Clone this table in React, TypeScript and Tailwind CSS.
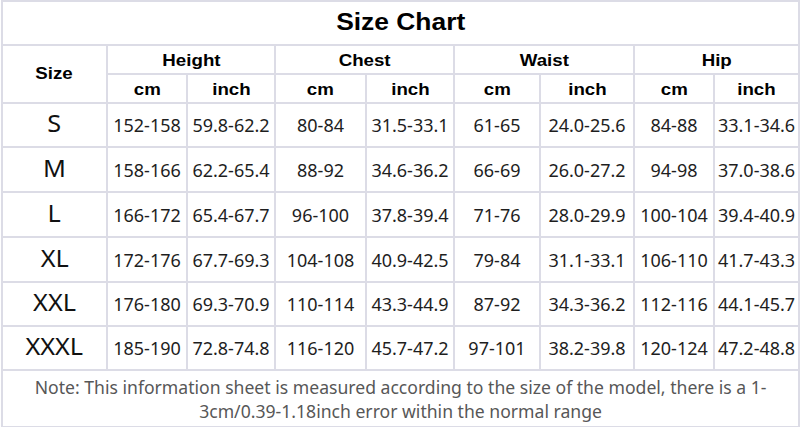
import React from 'react';

const rows = [
  { size: 'S', h: 'h-[44px]', v: ['152-158', '59.8-62.2', '80-84', '31.5-33.1', '61-65', '24.0-25.6', '84-88', '33.1-34.6'] },
  { size: 'M', h: 'h-[45px]', v: ['158-166', '62.2-65.4', '88-92', '34.6-36.2', '66-69', '26.0-27.2', '94-98', '37.0-38.6'] },
  { size: 'L', h: 'h-[45px]', v: ['166-172', '65.4-67.7', '96-100', '37.8-39.4', '71-76', '28.0-29.9', '100-104', '39.4-40.9'] },
  { size: 'XL', h: 'h-[45px]', v: ['172-176', '67.7-69.3', '104-108', '40.9-42.5', '79-84', '31.1-33.1', '106-110', '41.7-43.3'] },
  { size: 'XXL', h: 'h-[44px]', v: ['176-180', '69.3-70.9', '110-114', '43.3-44.9', '87-92', '34.3-36.2', '112-116', '44.1-45.7'] },
  { size: 'XXXL', h: 'h-[44px]', v: ['185-190', '72.8-74.8', '116-120', '45.7-47.2', '97-101', '38.2-39.8', '120-124', '47.2-48.8'] },
];

const groups = ['Height', 'Chest', 'Waist', 'Hip'];

const cell = 'border-2 border-[#dcdce6] text-center align-middle p-0';
const bold = "font-['Liberation_Sans',Arial,sans-serif] font-bold text-black";
const body = "font-['Noto_Sans','Open_Sans',sans-serif]";

export default function App() {
  return (
    <div className="w-[800px] h-[427px] bg-white overflow-hidden pl-[1px]">
      <table className="w-[797px] table-fixed border-collapse">
        <colgroup>
          <col className="w-[105px]" />
          <col className="w-[80px]" />
          <col className="w-[88px]" />
          <col className="w-[91px]" />
          <col className="w-[88px]" />
          <col className="w-[86px]" />
          <col className="w-[94px]" />
          <col className="w-[80px]" />
          <col className="w-[85px]" />
        </colgroup>
        <tbody>
          <tr className="h-[44px]">
            <td colSpan={9} className={cell}>
              <span className={`${bold} inline-block scale-x-110 text-[24px] leading-none`}>Size Chart</span>
            </td>
          </tr>
          <tr className="h-[29px]">
            <td rowSpan={2} className={cell}>
              <span className={`${bold} inline-block scale-x-110 text-[17px]`}>Size</span>
            </td>
            {groups.map((g) => (
              <td key={g} colSpan={2} className={cell}>
                <span className={`${bold} inline-block scale-x-110 text-[17px] leading-none`}>{g}</span>
              </td>
            ))}
          </tr>
          <tr className="h-[29px]">
            {groups.map((g) => (
              <React.Fragment key={g}>
                <td className={cell}>
                  <span className={`${bold} inline-block scale-x-110 text-[17px] leading-none`}>cm</span>
                </td>
                <td className={cell}>
                  <span className={`${bold} inline-block scale-x-110 text-[17px] leading-none`}>inch</span>
                </td>
              </React.Fragment>
            ))}
          </tr>
          {rows.map((r) => (
            <tr key={r.size} className={r.h}>
              <td className={cell}>
                <span className={`${body} inline-block scale-x-110 text-[23px] leading-none text-[#111]`}>{r.size}</span>
              </td>
              {r.v.map((x, i) => (
                <td key={i} className={`${cell} ${body} text-[18px] leading-none text-[#1e1e1e] whitespace-nowrap`}>
                  {x}
                </td>
              ))}
            </tr>
          ))}
          <tr className="h-[57px]">
            <td colSpan={9} className={`${cell} ${body} px-6 text-[17.6px] leading-[24px] text-[#575757]`}>
              Note: This information sheet is measured according to the size of the model, there is a 1-3cm/0.39-1.18inch error within the normal range
            </td>
          </tr>
        </tbody>
      </table>
    </div>
  );
}
